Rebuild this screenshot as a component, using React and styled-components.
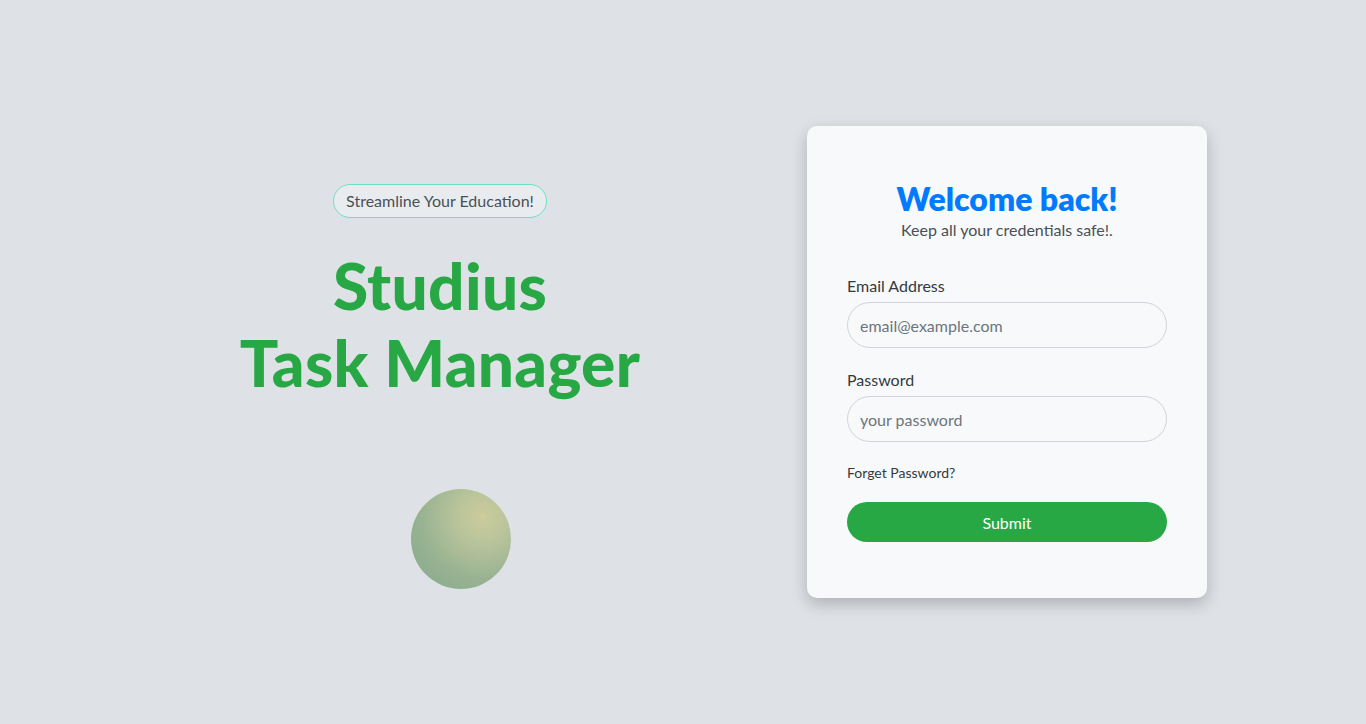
import React from "react";
import styled, { createGlobalStyle } from "styled-components";

const Global = createGlobalStyle`
  * { box-sizing: border-box; }
  html, body { margin: 0; padding: 0; }
  body {
    background: #dee2e6;
    font-family: Lato, "Noto Sans", "Liberation Sans", sans-serif;
    color: #212529;
  }
`;

const Page = styled.main`
  min-height: 724px;
  display: flex;
  align-items: center;
  justify-content: center;
  gap: 86px;
`;

const Hero = styled.section`
  align-self: flex-start;
  width: 562px;
  display: flex;
  flex-direction: column;
  align-items: center;
  padding-top: 184px;
`;

const Badge = styled.span`
  display: inline-block;
  padding: 0 12px;
  height: 34px;
  line-height: 32px;
  border: 1px solid #6edfc4;
  border-radius: 17px;
  background: #e9ecef;
  color: #495057;
  font-size: 16px;
`;

const Title = styled.h1`
  margin: 29px 0 0;
  color: #28a745;
  font-size: 64px;
  line-height: 77px;
  font-weight: 900;
  text-align: center;
  letter-spacing: 0.3px;
`;

const Orb = styled.div`
  margin: 88px 0 0 42px;
  width: 100px;
  height: 100px;
  border-radius: 50%;
  background: radial-gradient(circle at 72% 28%, #cdcc9c 0%, #b5c29a 30%, #97b291 62%, #84aa8e 100%);
`;

const Card = styled.section`
  width: 400px;
  background: #f8f9fa;
  border-radius: 10px;
  box-shadow: 0 6px 16px rgba(0, 0, 0, 0.22);
  padding: 54px 40px 56px;
`;

const Heading = styled.h2`
  margin: 0;
  text-align: center;
  color: #007bff;
  font-size: 32px;
  line-height: 38px;
  font-weight: 800;
`;

const Sub = styled.p`
  margin: 0 0 32px;
  text-align: center;
  color: #495057;
  font-size: 16px;
  line-height: 24px;
`;

const Field = styled.div`
  display: flex;
  flex-direction: column;
  gap: 4px;
  margin-bottom: 20px;
`;

const Label = styled.label`
  font-size: 16px;
  line-height: 24px;
  color: #343a40;
`;

const Input = styled.input`
  height: 46px;
  border: 1px solid #ced4da;
  border-radius: 23px;
  background: #f8f9fa;
  padding: 0 12px;
  font-family: inherit;
  font-size: 16px;
  color: #212529;
  outline: none;
  &::placeholder { color: #6c757d; }
`;

const Forgot = styled.a`
  display: block;
  font-size: 14px;
  line-height: 21px;
  color: #343a40;
  text-decoration: none;
  margin-bottom: 19px;
`;

const Submit = styled.button`
  width: 100%;
  height: 40px;
  border: none;
  border-radius: 20px;
  background: #28a745;
  color: #fff;
  font-family: inherit;
  font-size: 16px;
  font-weight: 400;
`;

export default function App() {
  return (
    <>
      <Global />
      <Page>
        <Hero>
          <Badge>Streamline Your Education!</Badge>
          <Title>
            Studius
            <br />
            Task Manager
          </Title>
          <Orb />
        </Hero>
        <Card>
          <Heading>Welcome back!</Heading>
          <Sub>Keep all your credentials safe!.</Sub>
          <Field>
            <Label htmlFor="email">Email Address</Label>
            <Input id="email" type="email" placeholder="email@example.com" />
          </Field>
          <Field>
            <Label htmlFor="pw">Password</Label>
            <Input id="pw" type="password" placeholder="your password" />
          </Field>
          <Forgot href="#">Forget Password?</Forgot>
          <Submit type="button">Submit</Submit>
        </Card>
      </Page>
    </>
  );
}
